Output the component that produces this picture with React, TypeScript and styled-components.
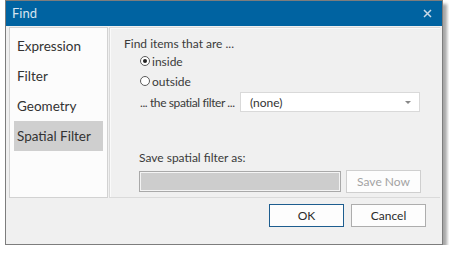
import React, { useState } from 'react'
import styled, { createGlobalStyle } from 'styled-components'

const FONT = 'Lato, "Noto Sans", "Liberation Sans", sans-serif'

const GlobalStyle = createGlobalStyle`
  html, body {
    margin: 0;
    padding: 0;
    background: #ffffff;
    font-family: ${FONT};
  }
  * {
    box-sizing: border-box;
  }
`

const Window = styled.div`
  margin: 0 0 0 5px;
  width: 438px;
  height: 245px;
  border: 1px solid #7d7d7d;
  background: #f0f0f0;
  box-shadow: 4px 4px 3px rgba(0, 0, 0, 0.35);
  display: flex;
  flex-direction: column;
`

const TitleBar = styled.div`
  height: 25px;
  background: #0063a1;
  color: #d6e4f0;
  font-size: 13px;
  display: flex;
  align-items: center;
  justify-content: space-between;
  padding: 0 10px 1px 6px;
`

const CloseIcon = styled.svg`
  width: 9px;
  height: 9px;
`

const Body = styled.div`
  display: flex;
  padding: 1px 2px 0 3px;
  height: 172px;
`

const Nav = styled.div`
  flex: none;
  width: 99px;
  background: #fcfcfc;
  border: 1px solid #d2d2d2;
  padding: 3px 4px;
  display: flex;
  flex-direction: column;
`

const NavItem = styled.div<{ active?: boolean }>`
  height: 30px;
  display: flex;
  align-items: center;
  padding-left: 3px;
  font-size: 13.5px;
  color: #333;
  background: ${({ active }) => (active ? '#cfcfcf' : 'transparent')};
  cursor: default;
`

const Panel = styled.div`
  flex: 1;
  min-width: 0;
  margin-left: 1px;
  border: 1px solid #dadada;
  border-right: none;
  box-shadow: inset 1px 1px 0 #fafafa;
  padding: 7px 0 0 14px;
  display: flex;
  flex-direction: column;
  font-size: 12px;
  color: #3a3a3a;
  white-space: nowrap;
`

const Label = styled.div`
  height: 16px;
  display: flex;
  align-items: center;
`

const RadioRow = styled.label`
  display: flex;
  align-items: center;
  height: 20px;
  margin-left: 16px;
  gap: 2px;
`

const RadioCircle = styled.span<{ checked?: boolean }>`
  width: 10px;
  height: 10px;
  border-radius: 50%;
  border: 1px solid #5a5a5a;
  background: #fff;
  display: flex;
  align-items: center;
  justify-content: center;
  &::after {
    content: '';
    width: 4px;
    height: 4px;
    border-radius: 50%;
    background: ${({ checked }) => (checked ? '#222' : 'transparent')};
  }
`

const FilterRow = styled.div`
  display: flex;
  align-items: center;
  margin: 1px 20px 0 16px;
`

const FilterLabel = styled.span`
  letter-spacing: -0.4px;
`

const Select = styled.div`
  margin-left: auto;
  width: 180px;
  height: 20px;
  background: #fff;
  border: 1px solid #d9d9d9;
  display: flex;
  align-items: center;
  justify-content: space-between;
  padding: 0 8px 0 9px;
  color: #333;
`

const Caret = styled.span`
  width: 0;
  height: 0;
  border-left: 3px solid transparent;
  border-right: 3px solid transparent;
  border-top: 3px solid #888;
`

const SaveBlock = styled.div`
  margin-top: 37px;
  margin-left: 15px;
  display: flex;
  flex-direction: column;
  gap: 5px;
`

const SaveRow = styled.div`
  display: flex;
  align-items: center;
  gap: 5px;
`

const NameInput = styled.div`
  width: 202px;
  height: 21px;
  background: #cdcdcd;
  border: 1px solid #a9a9a9;
  box-shadow: inset 0 0 0 1px #f4f4f4;
`

const Button = styled.button<{ primary?: boolean; disabled?: boolean }>`
  width: 75px;
  height: 23px;
  font-family: ${FONT};
  font-size: 12px;
  background: #fdfdfd;
  color: ${({ disabled }) => (disabled ? '#a3a3a3' : '#2b2b2b')};
  border: 1px solid ${({ primary, disabled }) => (primary ? '#1d5d8f' : disabled ? '#cfcfcf' : '#adadad')};
  padding: 0;
  cursor: default;
`

const Footer = styled.div`
  display: flex;
  justify-content: flex-end;
  gap: 7px;
  padding: 6px 16px 0 0;
`

const sections = ['Expression', 'Filter', 'Geometry', 'Spatial Filter']

export default function App() {
  const [active, setActive] = useState('Spatial Filter')
  const [where, setWhere] = useState('inside')

  return (
    <>
      <GlobalStyle />
      <Window>
        <TitleBar>
          <span>Find</span>
          <CloseIcon viewBox="0 0 9 9">
            <path d="M1 1L8 8M8 1L1 8" stroke="#c9d9e8" strokeWidth="1.5" />
          </CloseIcon>
        </TitleBar>
        <Body>
          <Nav>
            {sections.map((s) => (
              <NavItem key={s} active={s === active} onClick={() => setActive(s)}>
                {s}
              </NavItem>
            ))}
          </Nav>
          <Panel>
            <Label>Find items that are ...</Label>
            <RadioRow onClick={() => setWhere('inside')}>
              <RadioCircle checked={where === 'inside'} />
              inside
            </RadioRow>
            <RadioRow onClick={() => setWhere('outside')}>
              <RadioCircle checked={where === 'outside'} />
              outside
            </RadioRow>
            <FilterRow>
              <FilterLabel>... the spatial filter ...</FilterLabel>
              <Select>
                <span>(none)</span>
                <Caret />
              </Select>
            </FilterRow>
            <SaveBlock>
              <Label>Save spatial filter as:</Label>
              <SaveRow>
                <NameInput />
                <Button disabled>Save Now</Button>
              </SaveRow>
            </SaveBlock>
          </Panel>
        </Body>
        <Footer>
          <Button primary>OK</Button>
          <Button>Cancel</Button>
        </Footer>
      </Window>
    </>
  )
}
